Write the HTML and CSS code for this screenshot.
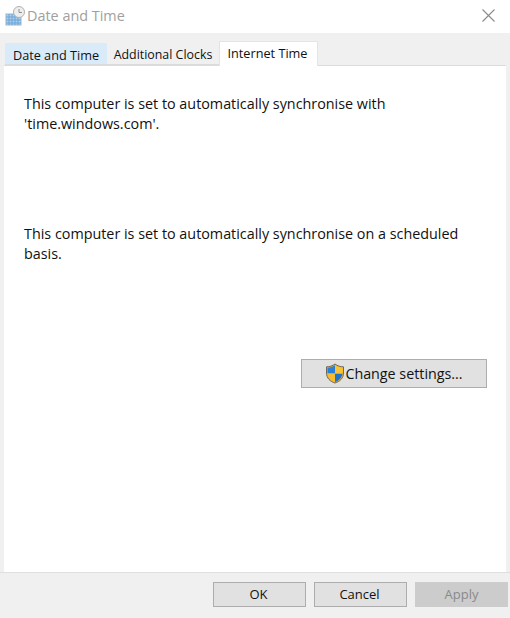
FILE: index.html
```html
<!DOCTYPE html>
<html lang="en">
  <head>
    <meta charset="UTF-8" />
    <meta name="viewport" content="width=device-width, initial-scale=1.0" />
    <title>Date and Time</title>
    <link rel="stylesheet" href="styles.css">
  </head>
  <body>
    <div class="titlebar">
      <svg class="app-icon" width="22" height="22" viewBox="0 0 22 22">
        <rect x="2" y="9" width="15" height="11" fill="#a9d0ee" stroke="#9db4c8" />
        <path d="M2 12h15M2 15h15M2 18h15M5 9v11M8 9v11M11 9v11M14 9v11" stroke="#6ea3d6" stroke-width="1" />
        <circle cx="15" cy="7" r="5.5" fill="#eeeeee" stroke="#b0b0b0" />
        <path d="M15 4v3.5h3" fill="none" stroke="#909090" />
      </svg>
      <span class="title">Date and Time</span>
      <svg class="close" width="13" height="13" viewBox="0 0 13 13">
        <path d="M0.5 0.5L12.5 12.5M12.5 0.5L0.5 12.5" stroke="#8a8a8a" stroke-width="1.1" />
      </svg>
    </div>
    <div class="main">
      <div class="tabs">
        <div class="tab first">Date and Time</div>
        <div class="tab second">Additional Clocks</div>
        <div class="tab active">Internet Time</div>
      </div>
      <div class="panel">
        <p class="msg top">This computer is set to automatically synchronise with<br />'time.windows.com'.</p>
        <p class="msg next">This computer is set to automatically synchronise on a scheduled<br />basis.</p>
        <div class="settings-row">
          <button class="btn settings">
            <svg width="20" height="21" viewBox="0 0 20 21">
              <path d="M10 1C7.500 3 4.500 3.800 1.500 3.800V10c0 5 3.600 8.600 8.500 10 4.900-1.400 8.500-5 8.500-10V3.800C15.500 3.800 12.500 3 10 1z" fill="#f5b325" stroke="#6e6a60" stroke-width="1" />
              <path d="M10 2.200C7.800 3.800 5.200 4.600 2.500 4.700V10.500H10z" fill="#2a7fd6" />
              <path d="M10 10.500V19c-4-1.300-7-4.500-7.500-8.500z" fill="#f7bd2e" />
              <path d="M10 10.500h7.500c-.5 4-3.500 7.200-7.500 8.500z" fill="#2372cc" />
              <path d="M10 2.200c2.200 1.600 4.800 2.400 7.500 2.500v5.800H10z" fill="#f9c433" />
            </svg>
            <span>Change settings...</span>
          </button>
        </div>
      </div>
      <div class="footer">
        <button class="btn action">OK</button>
        <button class="btn action">Cancel</button>
        <button class="btn action off">Apply</button>
      </div>
    </div>
  </body>
</html>
```

FILE: styles.css
```css
* {
  box-sizing: border-box;
}
html,
body {
  height: 100%;
}
body {
  margin: 0;
  display: flex;
  flex-direction: column;
  overflow: hidden;
  background-color: #fff;
  font-family: "Open Sans", "Noto Sans", sans-serif;
  font-size: 14.35px;
  color: #111;
}
.titlebar {
  display: flex;
  align-items: center;
  height: 33px;
  padding: 0 15px 2px 4px;
  background-color: #fff;
}
.app-icon {
  margin-right: 1px;
}
.title {
  flex: 1;
  font-size: 14.4px;
  color: #a0a0a0;
}
.main {
  flex: 1;
  display: flex;
  flex-direction: column;
  background-color: #f0f0f0;
}
.tabs {
  display: flex;
  align-items: flex-end;
  height: 32px;
  padding-left: 5px;
}
.tab {
  height: 22px;
  padding-top: 3px;
  font-size: 12.7px;
  text-align: center;
  border-bottom: 1px solid #dcdcdc;
}
.tab.first {
  width: 102px;
  background-color: #d9ebf9;
}
.tab.second {
  width: 112px;
  font-size: 12.4px;
  background-color: #f0f0f0;
}
.tab.active {
  width: 99px;
  height: 25px;
  position: relative;
  z-index: 1;
  margin-bottom: -1px;
  padding: 2px 2px 0 0;
  background-color: #fff;
  border: 1px solid #e4e4e4;
  border-bottom: none;
}
.panel {
  width: 502px;
  height: 507px;
  margin-left: 4px;
  padding: 28px 19px 0 20px;
  background-color: #fff;
  border-top: 1px solid #dcdcdc;
}
.msg {
  margin: 0;
  line-height: 20px;
}
.next {
  margin-top: 90px;
}
.settings-row {
  display: flex;
  justify-content: flex-end;
  margin-top: 95px;
}
.btn {
  font-family: inherit;
  color: #111;
  background-color: #e1e1e1;
  border: 1px solid #adadad;
}
.settings {
  display: flex;
  align-items: center;
  justify-content: center;
  width: 186px;
  height: 29px;
  padding: 0;
  font-size: 14.3px;
}
.footer {
  flex: 1;
  display: flex;
  gap: 8px;
  justify-content: flex-end;
  padding: 9px 2px 0 0;
  border-top: 1px solid #dfdfdf;
}
.action {
  width: 93px;
  height: 25px;
  padding: 0 2px 2px 0;
  font-size: 13px;
}
.action.off {
  padding-right: 0;
  color: #8a8a8a;
  background-color: #cccccc;
  border-color: #cccccc;
}
```
